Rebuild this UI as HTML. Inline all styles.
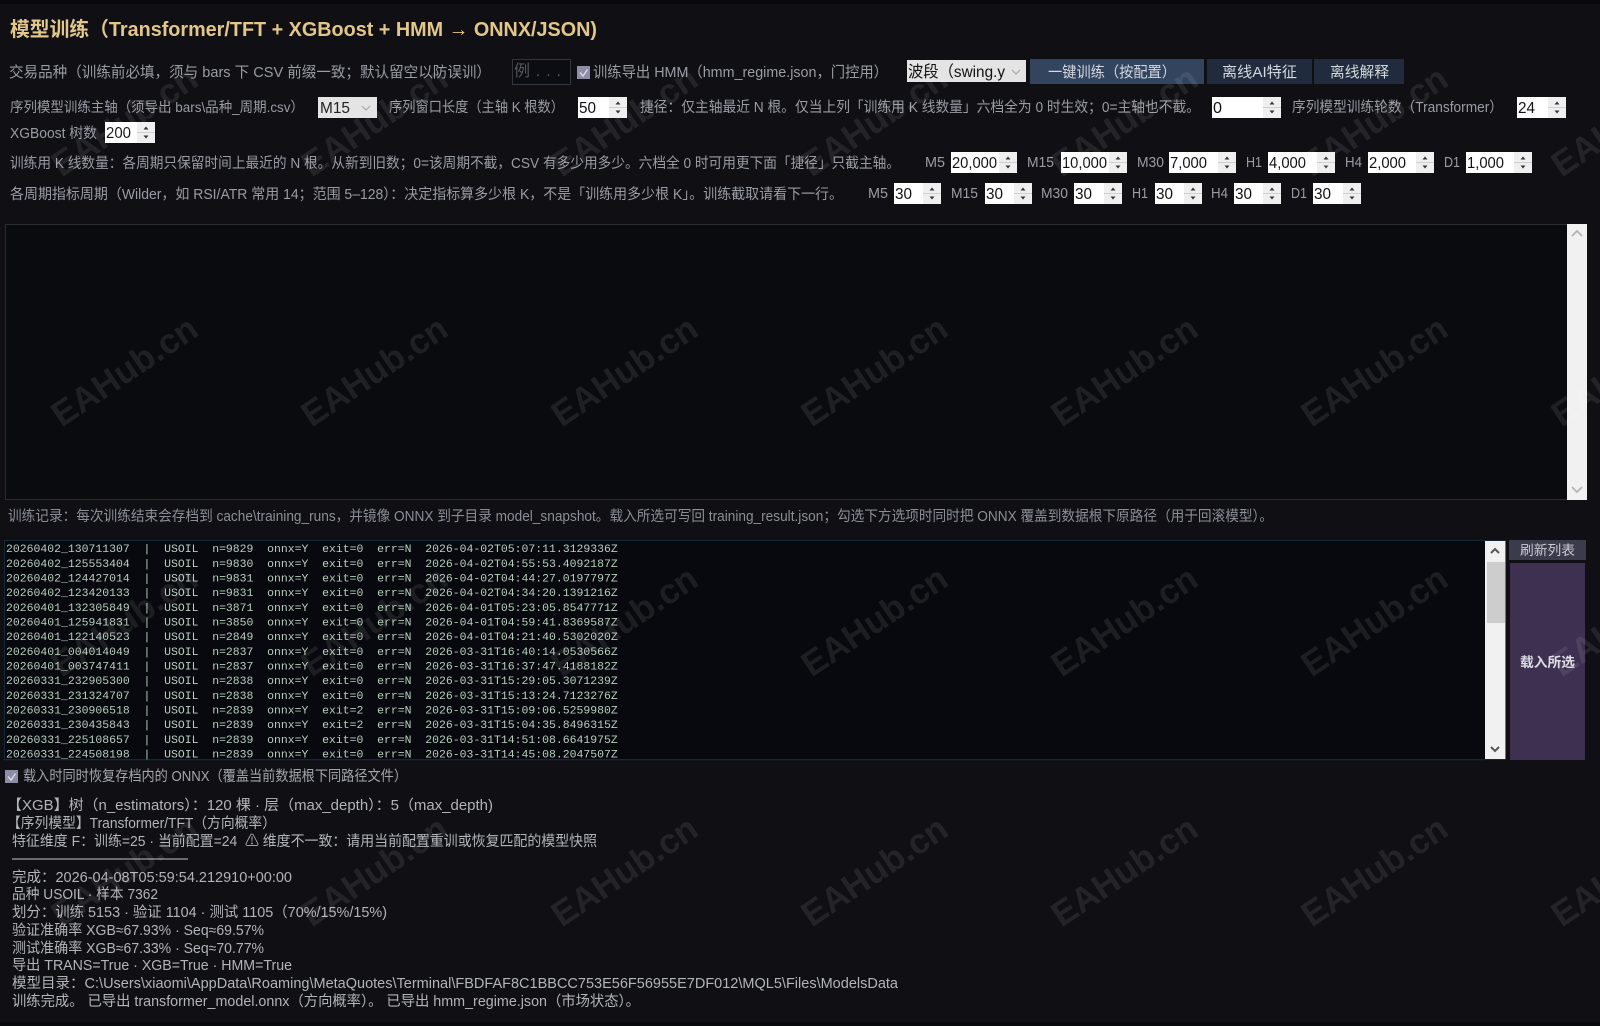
<!DOCTYPE html>
<html lang="zh-CN"><head><meta charset="utf-8"><title>模型训练</title>
<style>
html,body{margin:0;padding:0;background:#101014;width:1600px;height:1026px;overflow:hidden}
svg{display:block;position:absolute;left:0;top:0;filter:blur(.3px)}
text{font-family:"Liberation Sans","Noto Sans CJK SC",sans-serif;font-size:14.5px;fill:#9a9ca5;white-space:pre}
.t{font-size:20px;font-weight:700;fill:#e2c68a}
.v{font-size:16px;fill:#111}
.i{fill:#b2b4bb}
.m{font-family:"Liberation Mono",monospace;font-size:11.46px;fill:#b9cfbe}
.b{fill:#d3d7df;font-size:15px}
.w{font-size:35px;fill:rgba(255,255,255,.085);font-weight:700}
</style></head><body>
<svg width="1600" height="1026" viewBox="0 0 1600 1026" xmlns="http://www.w3.org/2000/svg">
<defs>
<g id="spin"><rect width="18" height="21" fill="#efefef"/><rect y="10" width="18" height="1" fill="#cfcfcf"/><path d="M6.5 7.500L9 4.500L11.500 7.500Z" fill="#333"/><path d="M6.500 13.500L9 16.500L11.500 13.500Z" fill="#333"/></g>
</defs>
<rect width="1600" height="1026" fill="#101014"/>
<rect width="1600" height="4" fill="#08090c"/>
<rect y="1022" width="1600" height="4" fill="#08090c"/>

<text class="t" x="10" y="36" textLength="587" lengthAdjust="spacingAndGlyphs">模型训练（Transformer/TFT + XGBoost + HMM → ONNX/JSON)</text>

<text x="9" y="77" style="font-size:15px" textLength="482" lengthAdjust="spacingAndGlyphs">交易品种（训练前必填，须与 bars 下 CSV 前缀一致；默认留空以防误训）</text>
<rect x="512.500" y="59.500" width="58" height="25" fill="#0b0d13" stroke="#33353c"/>
<text x="514" y="76" textLength="47" style="fill:#55575e;font-size:16px">例...</text>
<rect x="577" y="66" width="13" height="13" fill="#8d8da6"/>
<path d="M580 72.500L583 76L587.500 69.500" fill="none" stroke="#d8d8e4" stroke-width="1.500"/>
<text x="593" y="77" style="font-size:15px" textLength="295" lengthAdjust="spacingAndGlyphs">训练导出 HMM（hmm_regime.json，门控用）</text>
<rect x="907" y="60" width="119" height="22" fill="#e4e4e4"/>
<text x="908" y="77" class="v" textLength="97" lengthAdjust="spacingAndGlyphs">波段（swing.y</text>
<path d="M1012 70L1016 74L1020 70" fill="none" stroke="#a8a8a8" stroke-width="1.200"/>
<rect x="1030" y="59" width="174" height="25" fill="#33445f"/>
<text class="b" x="1048" y="77" textLength="128" lengthAdjust="spacingAndGlyphs">一键训练（按配置）</text>
<rect x="1207" y="59" width="105" height="25" fill="#202c3d"/>
<text class="b" x="1222" y="77" textLength="75" lengthAdjust="spacingAndGlyphs">离线AI特征</text>
<rect x="1314" y="59" width="90" height="25" fill="#202c3d"/>
<text class="b" x="1330" y="77" textLength="59" lengthAdjust="spacingAndGlyphs">离线解释</text>

<text x="10" y="112" style="font-size:14px" textLength="294" lengthAdjust="spacingAndGlyphs">序列模型训练主轴（须导出 bars\品种_周期.csv）</text>
<rect x="318" y="97" width="59" height="21" fill="#e4e4e4"/>
<text x="320" y="113" class="v" style="fill:#222" textLength="30" lengthAdjust="spacingAndGlyphs">M15</text>
<path d="M362 106L366 110L370 106" fill="none" stroke="#a8a8a8" stroke-width="1.200"/>
<text x="389" y="112" textLength="175" lengthAdjust="spacingAndGlyphs">序列窗口长度（主轴 K 根数）</text>
<rect x="578" y="97" width="49" height="21" fill="#fff"/><use href="#spin" x="609" y="97"/>
<text x="579" y="113" class="v" textLength="17" lengthAdjust="spacingAndGlyphs">50</text>
<text x="640" y="112" textLength="560" lengthAdjust="spacingAndGlyphs">捷径：仅主轴最近 N 根。仅当上列「训练用 K 线数量」六档全为 0 时生效；0=主轴也不截。</text>
<rect x="1212" y="97" width="69" height="21" fill="#fff"/><use href="#spin" x="1263" y="97"/>
<text x="1213" y="113" class="v" textLength="9" lengthAdjust="spacingAndGlyphs">0</text>
<text x="1292" y="112" textLength="211" lengthAdjust="spacingAndGlyphs">序列模型训练轮数（Transformer）</text>
<rect x="1517" y="97" width="49" height="21" fill="#fff"/><use href="#spin" x="1548" y="97"/>
<text x="1518" y="113" class="v" textLength="17" lengthAdjust="spacingAndGlyphs">24</text>

<text x="10" y="138" textLength="87" lengthAdjust="spacingAndGlyphs">XGBoost 树数</text>
<rect x="105" y="122" width="50" height="21" fill="#fff"/><use href="#spin" x="137" y="122"/>
<text x="106" y="138" class="v" textLength="25" lengthAdjust="spacingAndGlyphs">200</text>

<text x="10" y="168" textLength="890" lengthAdjust="spacingAndGlyphs">训练用 K 线数量：各周期只保留时间上最近的 N 根。从新到旧数；0=该周期不截，CSV 有多少用多少。六档全 0 时可用更下面「捷径」只截主轴。</text>
<text x="925" y="167" textLength="20" lengthAdjust="spacingAndGlyphs">M5</text>
<rect x="951" y="152" width="66" height="21" fill="#fff"/><use href="#spin" x="999" y="152"/>
<text x="952" y="168" class="v" textLength="45" lengthAdjust="spacingAndGlyphs">20,000</text>
<text x="1027" y="167" textLength="27" lengthAdjust="spacingAndGlyphs">M15</text>
<rect x="1061" y="152" width="66" height="21" fill="#fff"/><use href="#spin" x="1109" y="152"/>
<text x="1062" y="168" class="v" textLength="45" lengthAdjust="spacingAndGlyphs">10,000</text>
<text x="1137" y="167" textLength="27" lengthAdjust="spacingAndGlyphs">M30</text>
<rect x="1169" y="152" width="67" height="21" fill="#fff"/><use href="#spin" x="1218" y="152"/>
<text x="1170" y="168" class="v" textLength="37" lengthAdjust="spacingAndGlyphs">7,000</text>
<text x="1246" y="167" textLength="16" lengthAdjust="spacingAndGlyphs">H1</text>
<rect x="1268" y="152" width="67" height="21" fill="#fff"/><use href="#spin" x="1317" y="152"/>
<text x="1269" y="168" class="v" textLength="37" lengthAdjust="spacingAndGlyphs">4,000</text>
<text x="1345" y="167" textLength="17" lengthAdjust="spacingAndGlyphs">H4</text>
<rect x="1368" y="152" width="66" height="21" fill="#fff"/><use href="#spin" x="1416" y="152"/>
<text x="1369" y="168" class="v" textLength="37" lengthAdjust="spacingAndGlyphs">2,000</text>
<text x="1444" y="167" textLength="16" lengthAdjust="spacingAndGlyphs">D1</text>
<rect x="1466" y="152" width="66" height="21" fill="#fff"/><use href="#spin" x="1514" y="152"/>
<text x="1467" y="168" class="v" textLength="37" lengthAdjust="spacingAndGlyphs">1,000</text>

<text x="10" y="199" textLength="833" lengthAdjust="spacingAndGlyphs">各周期指标周期（Wilder，如 RSI/ATR 常用 14；范围 5–128）：决定指标算多少根 K，不是「训练用多少根 K」。训练截取请看下一行。</text>
<text x="868" y="198" textLength="20" lengthAdjust="spacingAndGlyphs">M5</text>
<rect x="894" y="183" width="47" height="21" fill="#fff"/><use href="#spin" x="923" y="183"/>
<text x="895" y="199" class="v" textLength="17" lengthAdjust="spacingAndGlyphs">30</text>
<text x="951" y="198" textLength="27" lengthAdjust="spacingAndGlyphs">M15</text>
<rect x="985" y="183" width="47" height="21" fill="#fff"/><use href="#spin" x="1014" y="183"/>
<text x="986" y="199" class="v" textLength="17" lengthAdjust="spacingAndGlyphs">30</text>
<text x="1041" y="198" textLength="27" lengthAdjust="spacingAndGlyphs">M30</text>
<rect x="1074" y="183" width="48" height="21" fill="#fff"/><use href="#spin" x="1104" y="183"/>
<text x="1075" y="199" class="v" textLength="17" lengthAdjust="spacingAndGlyphs">30</text>
<text x="1132" y="198" textLength="16" lengthAdjust="spacingAndGlyphs">H1</text>
<rect x="1155" y="183" width="47" height="21" fill="#fff"/><use href="#spin" x="1184" y="183"/>
<text x="1156" y="199" class="v" textLength="17" lengthAdjust="spacingAndGlyphs">30</text>
<text x="1211" y="198" textLength="17" lengthAdjust="spacingAndGlyphs">H4</text>
<rect x="1234" y="183" width="47" height="21" fill="#fff"/><use href="#spin" x="1263" y="183"/>
<text x="1235" y="199" class="v" textLength="17" lengthAdjust="spacingAndGlyphs">30</text>
<text x="1291" y="198" textLength="16" lengthAdjust="spacingAndGlyphs">D1</text>
<rect x="1313" y="183" width="48" height="21" fill="#fff"/><use href="#spin" x="1343" y="183"/>
<text x="1314" y="199" class="v" textLength="17" lengthAdjust="spacingAndGlyphs">30</text>

<rect x="5.500" y="224.500" width="1581" height="275" fill="#0a0b0f" stroke="#2b2c33"/>
<rect x="1567" y="224" width="20" height="276" fill="#f1f1f1"/>
<path d="M1572 236L1577 231L1582 236" fill="none" stroke="#b5b5b5" stroke-width="1.800"/>
<path d="M1572 487L1577 492L1582 487" fill="none" stroke="#b5b5b5" stroke-width="1.800"/>

<text x="8" y="521" textLength="1265" lengthAdjust="spacingAndGlyphs" style="fill:#8b8e97">训练记录：每次训练结束会存档到 cache\training_runs，并镜像 ONNX 到子目录 model_snapshot。载入所选可写回 training_result.json；勾选下方选项时同时把 ONNX 覆盖到数据根下原路径（用于回滚模型）。</text>

<rect x="4.500" y="540.500" width="1501" height="219" fill="#08090e" stroke="#13293a"/>
<rect x="1485" y="541" width="20" height="218" fill="#f1f1f1"/>
<rect x="1487" y="562" width="18" height="61" fill="#cdcdcd"/>
<rect x="1505" y="541" width="1" height="218" fill="#5a7c90"/>
<path d="M1491 553L1495 549L1499 553" fill="none" stroke="#555" stroke-width="2"/>
<path d="M1491 747L1495 751L1499 747" fill="none" stroke="#555" stroke-width="2"/>
<g>
<text class="m" x="6" y="552.100">20260402_130711307  |  USOIL  n=9829  onnx=Y  exit=0  err=N  2026-04-02T05:07:11.3129336Z</text>
<text class="m" x="6" y="566.800">20260402_125553404  |  USOIL  n=9830  onnx=Y  exit=0  err=N  2026-04-02T04:55:53.4092187Z</text>
<text class="m" x="6" y="581.400">20260402_124427014  |  USOIL  n=9831  onnx=Y  exit=0  err=N  2026-04-02T04:44:27.0197797Z</text>
<text class="m" x="6" y="596.100">20260402_123420133  |  USOIL  n=9831  onnx=Y  exit=0  err=N  2026-04-02T04:34:20.1391216Z</text>
<text class="m" x="6" y="610.800">20260401_132305849  |  USOIL  n=3871  onnx=Y  exit=0  err=N  2026-04-01T05:23:05.8547771Z</text>
<text class="m" x="6" y="625.500">20260401_125941831  |  USOIL  n=3850  onnx=Y  exit=0  err=N  2026-04-01T04:59:41.8369587Z</text>
<text class="m" x="6" y="640.100">20260401_122140523  |  USOIL  n=2849  onnx=Y  exit=0  err=N  2026-04-01T04:21:40.5302020Z</text>
<text class="m" x="6" y="654.800">20260401_004014049  |  USOIL  n=2837  onnx=Y  exit=0  err=N  2026-03-31T16:40:14.0530566Z</text>
<text class="m" x="6" y="669.500">20260401_003747411  |  USOIL  n=2837  onnx=Y  exit=0  err=N  2026-03-31T16:37:47.4188182Z</text>
<text class="m" x="6" y="684.100">20260331_232905300  |  USOIL  n=2838  onnx=Y  exit=0  err=N  2026-03-31T15:29:05.3071239Z</text>
<text class="m" x="6" y="698.800">20260331_231324707  |  USOIL  n=2838  onnx=Y  exit=0  err=N  2026-03-31T15:13:24.7123276Z</text>
<text class="m" x="6" y="713.500">20260331_230906518  |  USOIL  n=2839  onnx=Y  exit=2  err=N  2026-03-31T15:09:06.5259980Z</text>
<text class="m" x="6" y="728.100">20260331_230435843  |  USOIL  n=2839  onnx=Y  exit=2  err=N  2026-03-31T15:04:35.8496315Z</text>
<text class="m" x="6" y="742.800">20260331_225108657  |  USOIL  n=2839  onnx=Y  exit=0  err=N  2026-03-31T14:51:08.6641975Z</text>
<text class="m" x="6" y="757.500">20260331_224508198  |  USOIL  n=2839  onnx=Y  exit=0  err=N  2026-03-31T14:45:08.2047507Z</text>
</g>
<rect x="0" y="760" width="1500" height="6" fill="#101014"/>
<rect x="4.500" y="759.500" width="1481" height="0.800" fill="#13293a"/>

<rect x="1509" y="540" width="77" height="20" fill="#3a3b4b"/>
<text x="1520" y="555" textLength="55" lengthAdjust="spacingAndGlyphs" style="fill:#c9cad2;font-size:13.500px">刷新列表</text>
<rect x="1510" y="563" width="75" height="197" fill="#3d3050"/>
<text x="1520" y="667" textLength="55" lengthAdjust="spacingAndGlyphs" style="fill:#dcdce4;font-size:13.500px;font-weight:700">载入所选</text>

<rect x="5" y="770" width="13" height="13" fill="#8d8da6"/>
<path d="M8 776.500L11 780L15.500 773.500" fill="none" stroke="#d8d8e4" stroke-width="1.500"/>
<text x="23" y="781" textLength="384" lengthAdjust="spacingAndGlyphs" style="fill:#a4a6ae">载入时同时恢复存档内的 ONNX（覆盖当前数据根下同路径文件）</text>

<text class="i" x="7" y="810" textLength="486" lengthAdjust="spacingAndGlyphs">【XGB】树（n_estimators）：120 棵 · 层（max_depth）：5（max_depth)</text>
<text class="i" x="7" y="828" textLength="269" lengthAdjust="spacingAndGlyphs">【序列模型】Transformer/TFT（方向概率）</text>
<text class="i" x="12" y="846" textLength="585" lengthAdjust="spacingAndGlyphs">特征维度 F：训练=25 · 当前配置=24  ⚠ 维度不一致：请用当前配置重训或恢复匹配的模型快照</text>
<rect x="12" y="858" width="176" height="2" fill="#6a6b72"/>
<text class="i" x="12" y="882" textLength="280" lengthAdjust="spacingAndGlyphs">完成：2026-04-08T05:59:54.212910+00:00</text>
<text class="i" x="12" y="899" textLength="146" lengthAdjust="spacingAndGlyphs">品种 USOIL · 样本 7362</text>
<text class="i" x="12" y="917" textLength="375" lengthAdjust="spacingAndGlyphs">划分：训练 5153 · 验证 1104 · 测试 1105（70%/15%/15%)</text>
<text class="i" x="12" y="935" textLength="252" lengthAdjust="spacingAndGlyphs">验证准确率 XGB≈67.93% · Seq≈69.57%</text>
<text class="i" x="12" y="953" textLength="252" lengthAdjust="spacingAndGlyphs">测试准确率 XGB≈67.33% · Seq≈70.77%</text>
<text class="i" x="12" y="970" textLength="280" lengthAdjust="spacingAndGlyphs">导出 TRANS=True · XGB=True · HMM=True</text>
<text class="i" x="12" y="988" textLength="886" lengthAdjust="spacingAndGlyphs">模型目录：C:\Users\xiaomi\AppData\Roaming\MetaQuotes\Terminal\FBDFAF8C1BBCC753E56F56955E7DF012\MQL5\Files\ModelsData</text>
<text class="i" x="12" y="1006" textLength="628" lengthAdjust="spacingAndGlyphs">训练完成。 已导出 transformer_model.onnx（方向概率）。 已导出 hmm_regime.json（市场状态）。</text>

<g text-anchor="middle">
<text class="w" transform="translate(131 131) rotate(-34)">EAHub.cn</text>
<text class="w" transform="translate(381 131) rotate(-34)">EAHub.cn</text>
<text class="w" transform="translate(631 131) rotate(-34)">EAHub.cn</text>
<text class="w" transform="translate(881 131) rotate(-34)">EAHub.cn</text>
<text class="w" transform="translate(1131 131) rotate(-34)">EAHub.cn</text>
<text class="w" transform="translate(1381 131) rotate(-34)">EAHub.cn</text>
<text class="w" transform="translate(1631 131) rotate(-34)">EAHub.cn</text>
<text class="w" transform="translate(131 381) rotate(-34)">EAHub.cn</text>
<text class="w" transform="translate(381 381) rotate(-34)">EAHub.cn</text>
<text class="w" transform="translate(631 381) rotate(-34)">EAHub.cn</text>
<text class="w" transform="translate(881 381) rotate(-34)">EAHub.cn</text>
<text class="w" transform="translate(1131 381) rotate(-34)">EAHub.cn</text>
<text class="w" transform="translate(1381 381) rotate(-34)">EAHub.cn</text>
<text class="w" transform="translate(1631 381) rotate(-34)">EAHub.cn</text>
<text class="w" transform="translate(131 631) rotate(-34)">EAHub.cn</text>
<text class="w" transform="translate(381 631) rotate(-34)">EAHub.cn</text>
<text class="w" transform="translate(631 631) rotate(-34)">EAHub.cn</text>
<text class="w" transform="translate(881 631) rotate(-34)">EAHub.cn</text>
<text class="w" transform="translate(1131 631) rotate(-34)">EAHub.cn</text>
<text class="w" transform="translate(1381 631) rotate(-34)">EAHub.cn</text>
<text class="w" transform="translate(1631 631) rotate(-34)">EAHub.cn</text>
<text class="w" transform="translate(131 881) rotate(-34)">EAHub.cn</text>
<text class="w" transform="translate(381 881) rotate(-34)">EAHub.cn</text>
<text class="w" transform="translate(631 881) rotate(-34)">EAHub.cn</text>
<text class="w" transform="translate(881 881) rotate(-34)">EAHub.cn</text>
<text class="w" transform="translate(1131 881) rotate(-34)">EAHub.cn</text>
<text class="w" transform="translate(1381 881) rotate(-34)">EAHub.cn</text>
<text class="w" transform="translate(1631 881) rotate(-34)">EAHub.cn</text>
</g>
</svg>
</body></html>
